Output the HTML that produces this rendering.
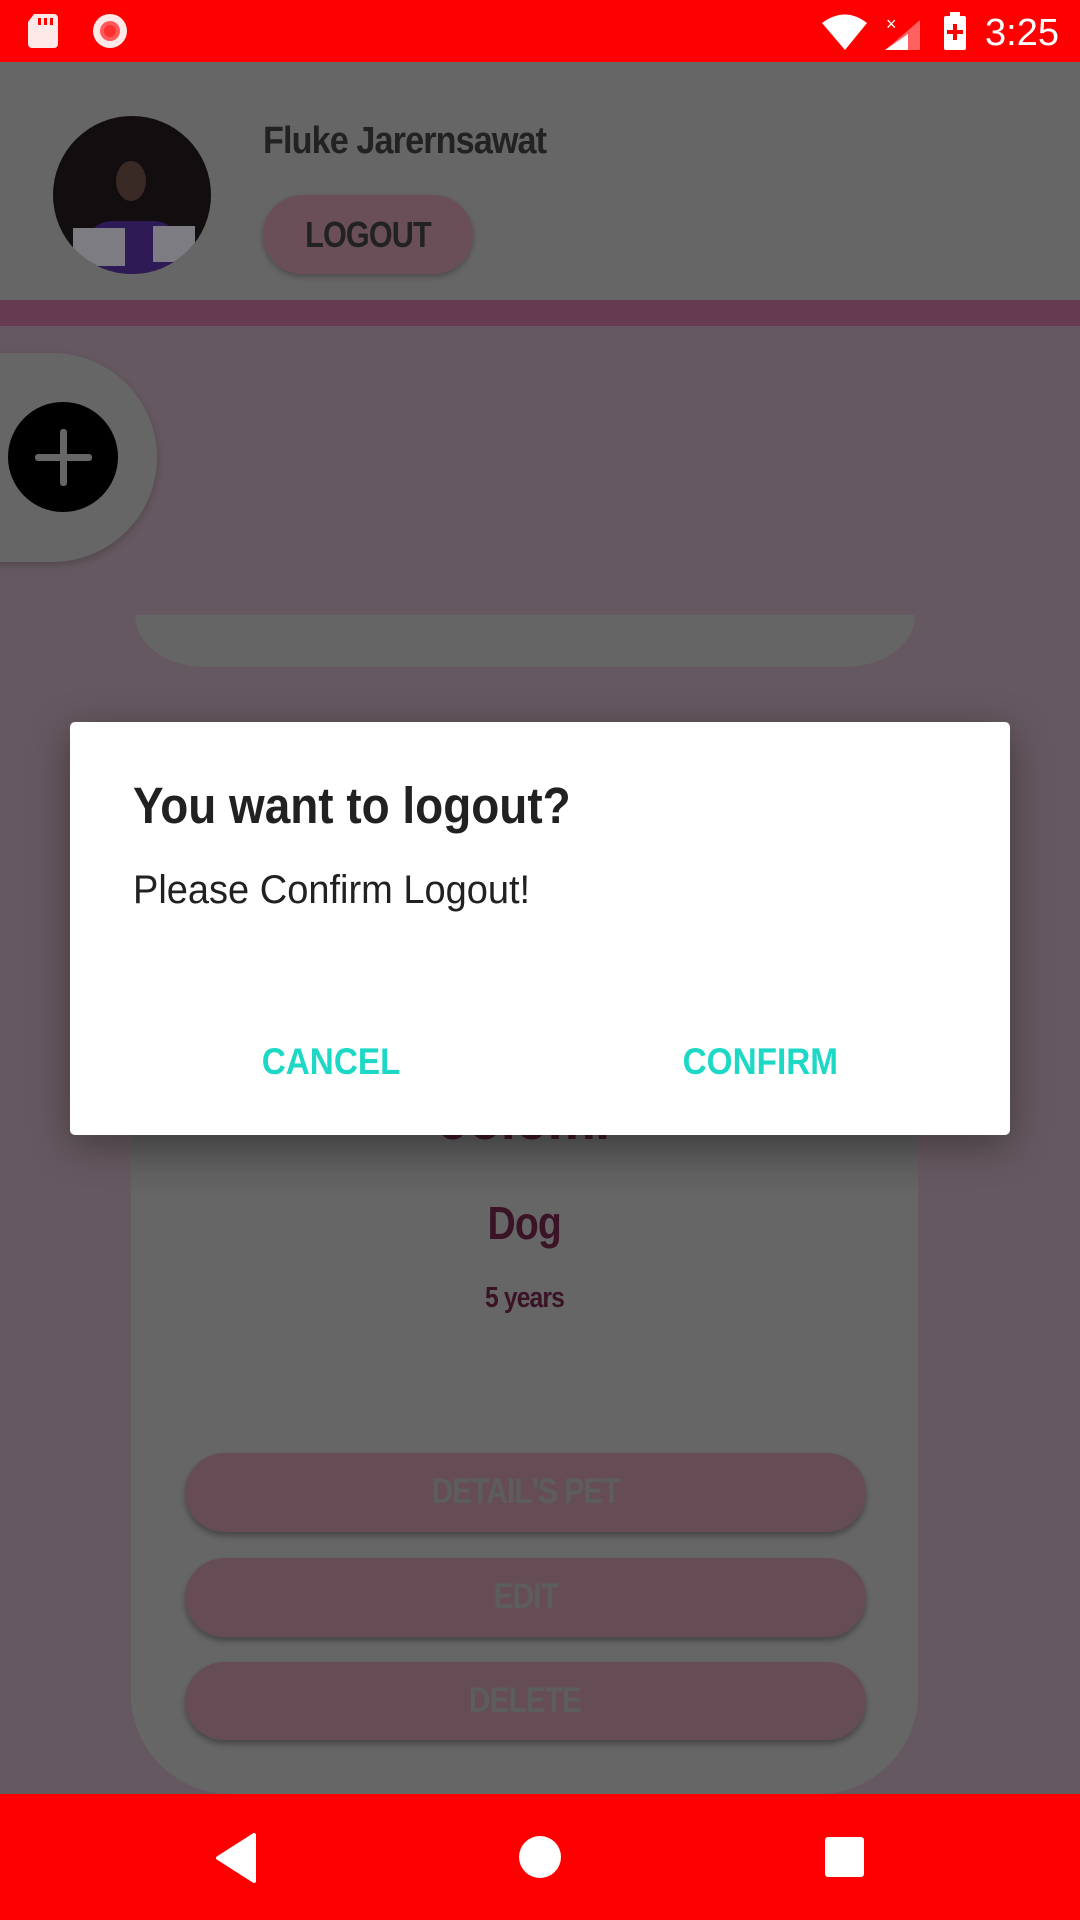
<!DOCTYPE html>
<html><head><meta charset="utf-8"><style>
*{margin:0;padding:0;box-sizing:border-box}
body{width:1080px;height:1920px;position:relative;overflow:hidden;background:#665860;font-family:"Liberation Sans",sans-serif}
.abs{position:absolute}
.hand{font-family:"Liberation Sans",sans-serif;font-weight:bold;letter-spacing:-1px}
.sq{display:inline-block;transform:scaleX(0.85);transform-origin:center}
</style></head><body>
<!-- status bar -->
<div class="abs" style="left:0;top:0;width:1080px;height:62px;background:#ff0000"></div>
<svg class="abs" style="left:0;top:0" width="1080" height="62">
  <path d="M34 14 h20 a4 4 0 0 1 4 4 v26 a4 4 0 0 1 -4 4 h-22 a4 4 0 0 1 -4 -4 v-22 z" fill="#ffe8e8"/>
  <rect x="38" y="18" width="3" height="7" fill="#ff0000"/><rect x="44" y="18" width="3" height="7" fill="#ff0000"/><rect x="50" y="18" width="3" height="7" fill="#ff0000"/>
  <circle cx="110" cy="31" r="17" fill="#ffe8e8"/><circle cx="110" cy="31" r="10" fill="#ff5a5a"/><circle cx="110" cy="31" r="6" fill="#ff3030"/>
  <path d="M822 23 Q845 6 867 23 L845 50 Z" fill="#fff"/>
  <path d="M920 20 L920 50 L885 50 Z" fill="#ff6060"/><path d="M908 34 L908 50 L885 50 Z" fill="#fff"/>
  <text x="886" y="30" font-size="18" fill="#fff" font-family="Liberation Sans">×</text>
  <rect x="944" y="16" width="22" height="34" rx="2" fill="#fff"/><rect x="950" y="12" width="10" height="5" fill="#fff"/>
  <path d="M955 24 v16 M947 32 h16" stroke="#ff0000" stroke-width="4"/>
  <text x="985" y="45" font-size="38" fill="#fff" font-family="Liberation Sans">3:25</text>
</svg>
<!-- header -->
<div class="abs" style="left:0;top:62px;width:1080px;height:238px;background:#666666"></div>
<div class="abs" style="left:0;top:300px;width:1080px;height:26px;background:#663a50"></div>
<div class="abs" style="left:53px;top:116px;width:158px;height:158px;border-radius:50%;background:#120d0f;overflow:hidden">
  <div class="abs" style="left:30px;top:105px;width:100px;height:60px;background:#2e1a55;border-radius:30px 30px 0 0"></div>
  <div class="abs" style="left:63px;top:45px;width:30px;height:40px;background:#3a2a26;border-radius:50%"></div>
  <div class="abs" style="left:20px;top:112px;width:52px;height:38px;background:#7c7c82"></div>
  <div class="abs" style="left:100px;top:110px;width:42px;height:36px;background:#7c7c82"></div>
</div>
<div class="abs hand" style="left:263px;top:120px;font-size:38px;color:#222;transform:scaleX(0.9);transform-origin:left">Fluke Jarernsawat</div>
<div class="abs" style="left:263px;top:195px;width:210px;height:79px;border-radius:40px;background:#6a4f58;box-shadow:0 3px 6px rgba(0,0,0,.25)"></div>
<div class="abs hand" style="left:263px;top:214px;width:210px;text-align:center;font-size:36px;color:#222"><span class="sq">LOGOUT</span></div>
<!-- fab panel -->
<div class="abs" style="left:-60px;top:353px;width:217px;height:209px;border-radius:0 105px 105px 0;background:#666666;box-shadow:0 3px 8px rgba(0,0,0,.2)"></div>
<div class="abs" style="left:8px;top:402px;width:110px;height:110px;border-radius:50%;background:#000"></div>
<div class="abs" style="left:35px;top:454px;width:57px;height:7px;border-radius:3px;background:#666"></div>
<div class="abs" style="left:60px;top:429px;width:7px;height:57px;border-radius:3px;background:#666"></div>
<!-- top card bottom -->
<div class="abs" style="left:135px;top:615px;width:780px;height:52px;border-radius:0 0 70px 70px / 0 0 52px 52px;background:#656565"></div>
<!-- lower card -->
<div class="abs" style="left:131px;top:1100px;width:787px;height:694px;border-radius:0 0 100px 100px;background:linear-gradient(#545454 0,#666 100px,#666 100%)"></div>
<div class="abs hand" style="left:131px;top:1080px;width:787px;text-align:center;font-size:64px;color:#3a1426"><span class="sq">Jolomi</span></div>
<div class="abs hand" style="left:131px;top:1196px;width:787px;text-align:center;font-size:46px;color:#3a1426"><span class="sq">Dog</span></div>
<div class="abs hand" style="left:131px;top:1282px;width:787px;text-align:center;font-size:29px;color:#3a1426"><span class="sq">5 years</span></div>
<div class="abs" style="left:185px;top:1453px;width:681px;height:79px;border-radius:40px;background:#664d55;box-shadow:0 4px 6px rgba(0,0,0,.3)"></div>
<div class="abs hand" style="left:185px;top:1472px;width:681px;text-align:center;font-size:35px;color:#5d5d5d"><span class="sq">DETAIL'S PET</span></div>
<div class="abs" style="left:185px;top:1558px;width:681px;height:79px;border-radius:40px;background:#664d55;box-shadow:0 4px 6px rgba(0,0,0,.3)"></div>
<div class="abs hand" style="left:185px;top:1577px;width:681px;text-align:center;font-size:35px;color:#5d5d5d"><span class="sq">EDIT</span></div>
<div class="abs" style="left:185px;top:1662px;width:681px;height:78px;border-radius:40px;background:#664d55;box-shadow:0 4px 6px rgba(0,0,0,.3)"></div>
<div class="abs hand" style="left:185px;top:1681px;width:681px;text-align:center;font-size:35px;color:#5d5d5d"><span class="sq">DELETE</span></div>
<!-- dialog -->
<div class="abs" style="left:70px;top:722px;width:940px;height:413px;background:#fff;border-radius:5px;box-shadow:0 10px 40px rgba(0,0,0,.35)"></div>
<div class="abs" style="left:133px;top:776px;font-size:51px;font-weight:bold;color:#212121;transform:scaleX(0.9);transform-origin:left">You want to logout?</div>
<div class="abs" style="left:133px;top:868px;font-size:40px;color:#212121;transform:scaleX(0.95);transform-origin:left">Please Confirm Logout!</div>
<div class="abs" style="left:231px;top:1041px;width:200px;text-align:center;font-size:37px;color:#1ed8c6;font-weight:bold"><span class="sq" style="transform:scaleX(0.9)">CANCEL</span></div>
<div class="abs" style="left:640px;top:1041px;width:240px;text-align:center;font-size:37px;color:#1ed8c6;font-weight:bold"><span class="sq" style="transform:scaleX(0.9)">CONFIRM</span></div>
<!-- nav bar -->
<div class="abs" style="left:0;top:1794px;width:1080px;height:126px;background:#ff0000"></div>
<svg class="abs" style="left:0;top:1794px" width="1080" height="126">
  <path d="M254 41 L254 87 L218 64 Z" fill="#fff" stroke="#fff" stroke-width="4" stroke-linejoin="round"/>
  <circle cx="540" cy="63" r="21" fill="#fff"/>
  <rect x="825" y="43" width="39" height="40" rx="3" fill="#fff"/>
</svg>
</body></html>
